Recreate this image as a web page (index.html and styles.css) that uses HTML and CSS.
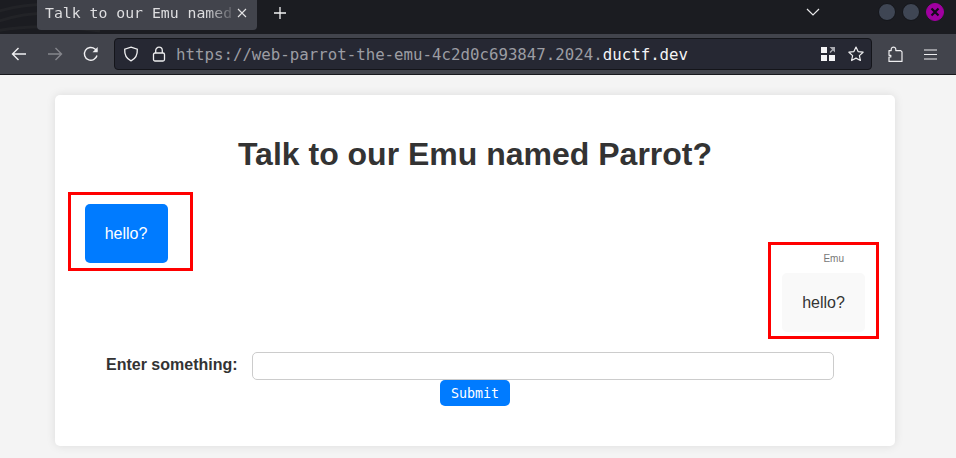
FILE: index.html
```html
<!DOCTYPE html>
<html lang="en">
<head>
<meta charset="utf-8">
<title>Talk to our Emu named Parrot?</title>
<link rel="stylesheet" href="styles.css">
</head>
<body>
<header class="browser">
  <div class="tabstrip">
    <svg class="wave" width="120" height="34" viewBox="0 0 120 34" fill="none" stroke="#222327" stroke-width="3"><path d="M-4 12C20 4 50 2 90 6"/><path d="M-4 22C20 14 40 12 60 14"/><path d="M-4 31C20 26 50 24 100 31"/></svg>
    <div class="tab">
      <span class="tab-title">Talk to our Emu named</span>
      <svg class="tab-close" width="10" height="10" viewBox="0 0 10 10" stroke="#e4e4e6" stroke-width="1.1" fill="none"><path d="M1 1l8 8M9 1l-8 8"/></svg>
    </div>
    <svg class="newtab" width="12" height="12" viewBox="0 0 12 12" stroke="#f2f2f3" stroke-width="1.3" fill="none"><path d="M6 0v12M0 6h12"/></svg>
    <svg class="chevron" width="14" height="8" viewBox="0 0 14 8" stroke="#e8e8ea" stroke-width="1.2" fill="none"><path d="M1 1l6 6 6-6"/></svg>
    <div class="winctl">
      <span class="dot"></span>
      <span class="dot"></span>
      <span class="dot close"><svg width="10" height="10" viewBox="0 0 10 10" stroke="#12091a" stroke-width="2.2" fill="none"><path d="M1.5 1.5l7 7M8.5 1.5l-7 7"/></svg></span>
    </div>
  </div>
  <div class="toolbar">
    <svg class="nav back" width="16" height="14" viewBox="0 0 16 14" stroke="#f0f0f2" stroke-width="1.4" fill="none"><path d="M15 7H1.5M7.5 1l-6 6 6 6"/></svg>
    <svg class="nav fwd" width="16" height="14" viewBox="0 0 16 14" stroke="#85868c" stroke-width="1.4" fill="none"><path d="M1 7h13.5M8.5 1l6 6-6 6"/></svg>
    <svg class="nav reload" width="16" height="16" viewBox="0 0 16 16" stroke="#f0f0f2" stroke-width="1.4" fill="none"><path d="M14 9.5A6.4 6.4 0 1 1 12 3l2 2"/><path d="M14.7 1v5.2H9.5z" fill="#f0f0f2" stroke="none"/></svg>
    <div class="urlbar">
      <svg class="shield" width="16" height="16" viewBox="0 0 16 16" stroke="#eeeef0" stroke-width="1.3" fill="none"><path d="M8 1.2l6.3 2c.3 5.5-1.7 9.500-6.300 11.600C3.400 12.700 1.400 8.700 1.700 3.200z"/></svg>
      <svg class="lock" width="14" height="16" viewBox="0 0 14 16" stroke="#eeeef0" stroke-width="1.300" fill="none"><rect x="1.500" y="7" width="11" height="8" rx="1.500"/><path d="M3.700 7V4.500a3.300 3.300 0 0 1 6.600 0V7"/></svg>
      <span class="url"><span class="url-dim">https://web-parrot-the-emu-4c2d0c693847.2024.</span>ductf.dev</span>
      <svg class="qr" width="14" height="14" viewBox="0 0 14 14" fill="#f4f4f6"><rect width="6" height="6"/><rect y="8" width="6" height="6"/><rect x="8" y="8" width="6" height="6"/><path d="M8.500 0H14v5.500l-2-2-2.500 2.500-1-1L11 2.500z" fill="#a9aab0"/></svg>
      <svg class="star" width="16" height="16" viewBox="0 0 16 16" stroke="#eeeef0" stroke-width="1.200" stroke-linejoin="round" fill="none"><path d="M8 1l2.100 4.600 5 .6-3.700 3.400 1 4.900L8 12.100l-4.400 2.400 1-4.900L.9 6.200l5-.6z"/></svg>
    </div>
    <svg class="puzzle" width="15" height="16" viewBox="0 0 15 16" stroke="#eeeef0" stroke-width="1.200" stroke-linejoin="round" fill="none"><path d="M1 15.400V11H2.800V9.300H1V4.600H3.200V2.800a2.400 2.400 0 0 1 4.600 0V4.600H12.800L14 5.800v9.600z"/></svg>
    <svg class="menu" width="13" height="11" viewBox="0 0 13 11" stroke="#eeeef0" stroke-width="1.200" fill="none"><path d="M0 1h13M0 5.500h13M0 10h13"/></svg>
  </div>
</header>

<main class="page">
  <section class="card">
    <h1 class="title">Talk to our Emu named Parrot?</h1>
    <div class="chat">
      <div class="msg-user">
        <div class="bubble bubble-user">hello?</div>
      </div>
      <div class="msg-emu">
        <div class="sender">Emu</div>
        <div class="bubble bubble-emu">hello?</div>
      </div>
    </div>
    <form class="entry">
      <div class="entry-row">
        <label class="entry-label" for="msg">Enter something:</label>
        <input class="entry-input" id="msg" type="text">
      </div>
      <button class="submit" type="button">Submit</button>
    </form>
  </section>
</main>

<div class="mark mark-user"></div>
<div class="mark mark-emu"></div>
</body>
</html>
```

FILE: styles.css
```css
* { box-sizing: border-box; }
html, body { margin: 0; height: 100%; overflow: hidden; }
body { background: #f4f4f4; font-family: "Liberation Sans", Arial, sans-serif; color: #333; }

.browser { height: 75px; font-family: "DejaVu Sans Mono", monospace; }
.tabstrip { position: relative; height: 34px; background: #1b1c21; display: flex; align-items: flex-start; overflow: hidden; }
.wave { position: absolute; left: 0; top: 0; }
.tab { position: relative; width: 220px; height: 30px; margin-left: 37px; padding: 0 13px 0 8px; background: #42444c; border-radius: 0 0 4px 4px; display: flex; align-items: center; }
.tab-title { width: 190px; flex: none; white-space: nowrap; font-size: 14.800px; color: #dedee0; margin-top: -5px;
  -webkit-mask-image: linear-gradient(to right, #000 160px, rgba(0, 0, 0, 0.15) 188px); mask-image: linear-gradient(to right, #000 160px, rgba(0, 0, 0, 0.15) 188px); }
.tab-close { margin-left: 2px; margin-top: -5px; flex: none; }
.newtab { margin: 7px 0 0 17px; flex: none; position: relative; }
.chevron { margin: 8px 0 0 520px; flex: none; }
.winctl { display: flex; gap: 6px; margin: 3px 0 0 58px; }
.dot { width: 18px; height: 18px; border-radius: 50%; background: #3f4654; border: 1px solid #14151a; display: flex; align-items: center; justify-content: center; }
.dot.close { background: #a000a0; border-color: #a000a0; }

.toolbar { height: 41px; background: #42444c; border-bottom: 1px solid #17181c; display: flex; align-items: center; }
.nav { flex: none; }
.back { margin-left: 11px; }
.fwd { margin-left: 20px; }
.reload { margin-left: 20px; }
.urlbar { width: 758px; height: 32px; margin-left: 15px; background: #262833; border: 1px solid #14151a; border-radius: 4px; display: flex; align-items: center; }
.shield { margin-left: 8px; flex: none; }
.lock { margin-left: 13px; flex: none; }
.url { margin-left: 10px; width: 512px; font-size: 15.750px; color: #f4f4f6; white-space: nowrap; }
.url-dim { color: #9c9da3; }
.qr { margin-left: 133px; flex: none; }
.star { margin-left: 13px; flex: none; }
.puzzle { margin-left: 16px; flex: none; }
.menu { margin-left: 21px; flex: none; }

.page { padding: 20px 61px 0 55px; }
.card { width: 840px; height: 351px; padding: 20px 30px 0; background: #fff; border-radius: 5px; box-shadow: 0 0 10px rgba(0, 0, 0, 0.1); }
.title { margin: 21px 0 21px; font-size: 32px; line-height: 37px; font-weight: 700; text-align: center; color: #333; }

.chat { display: flex; justify-content: space-between; align-items: flex-start; padding-top: 10px; }
.msg-emu { margin-top: 49px; }
.sender { font-size: 10px; line-height: 12px; margin-bottom: 8px; padding-right: 21px; text-align: right; color: #777; }
.bubble { width: 83px; height: 59px; border-radius: 5px; font-size: 16px; display: flex; align-items: center; justify-content: center; }
.bubble-user { background: #007bff; color: #fff; padding-right: 1px; }
.bubble-emu { background: #f9f9f9; color: #333; }

.entry { margin-top: 20px; display: flex; flex-direction: column; align-items: center; }
.entry-row { width: 100%; display: flex; align-items: center; padding-left: 21px; }
.entry-label { width: 146px; flex: none; margin-top: -2px; font-size: 16px; font-weight: 700; color: #333; }
.entry-input { width: 582px; height: 28px; flex: none; padding: 0 10px; background: #fff; border: 1px solid #ccc; border-radius: 5px; }
.submit { width: 70px; height: 26px; padding: 0; background: #007bff; color: #fff; border: 0; border-radius: 5px; font-family: "DejaVu Sans Mono", monospace; font-size: 13.333px; }

.mark { position: absolute; border: 3px solid #f00; }
.mark-user { left: 68px; top: 192px; width: 125px; height: 79px; }
.mark-emu { left: 768px; top: 242px; width: 111px; height: 97px; }
```
